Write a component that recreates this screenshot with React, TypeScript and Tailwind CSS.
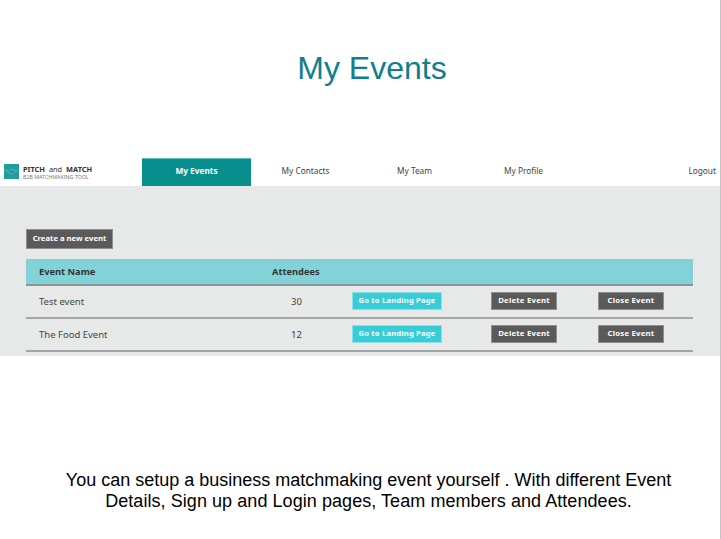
import React from 'react';

const events = [
  { name: 'Test event', attendees: 30 },
  { name: 'The Food Event', attendees: 12 },
];

const DarkButton = ({ label, className }: { label: string; className: string }) => (
  <button className={`h-[18px] w-[66px] bg-[#5a5a5a] border border-[#8e9090] text-white text-[7.8px] font-bold tracking-[0.2px] flex items-center justify-center ${className}`}>
    {label}
  </button>
);

const Logo = () => (
  <div className="flex items-center w-[142px] pl-[4px] pb-[1px]">
    <svg width="15" height="15" viewBox="0 0 15 15" className="shrink-0">
      <rect width="15" height="15" fill="#1f9d9f" />
      <path d="M0 6h3l2 1 2-1.500 2 0 3 1.500h3M3 7l2.500 2.500 2 1 2-1L12 7" fill="none" stroke="#8fd0d0" strokeWidth="0.7" strokeDasharray="1 0.6" />
    </svg>
    <div className="ml-[4px] flex flex-col text-[#333]">
      <div className="text-[7.4px] font-bold leading-[9px] whitespace-nowrap mt-[1px]">
        PITCH <span className="font-normal px-[2px]">and</span> MATCH
      </div>
      <div className="text-[5.3px] leading-[6px] text-[#777] whitespace-nowrap">B2B MATCHMAKING TOOL</div>
    </div>
  </div>
);

export default function App() {
  return (
    <div className="w-[721px] h-[539px] bg-white border-r border-[#c4c6ca] overflow-hidden flex flex-col font-['Noto_Sans',sans-serif]">
      <div className="h-[158px] pt-[46px] text-center pl-[24px]">
        <h1 className="text-[32px] leading-[44px] text-[#0f7f8d] font-['Liberation_Sans',sans-serif]">My Events</h1>
      </div>

      <nav className="h-[28px] flex items-center text-[8.3px] text-[#444] shrink-0">
        <Logo />
        <a className="h-full w-[109px] bg-[#088f8d] border-t border-[#5fbdb9] text-white font-bold flex items-center justify-center pb-[2px]">My Events</a>
        <a className="w-[109px] text-center pb-[2px]">My Contacts</a>
        <a className="w-[109px] text-center pb-[2px]">My Team</a>
        <a className="w-[109px] text-center pb-[2px]">My Profile</a>
        <a className="ml-auto pr-[4px] pb-[2px]">Logout</a>
      </nav>

      <main className="h-[170px] bg-[#e7e8e8] pl-[26px] pr-[27px] pt-[43px] shrink-0">
        <button className="h-[20px] w-[87px] bg-[#5a5a5a] border border-[#8e9090] text-white text-[7.7px] font-bold flex items-center justify-center">
          Create a new event
        </button>
        <div className="mt-[10px]">
          <div className="h-[27px] bg-[#81d3d8] border-b-2 border-[#8a9496] flex items-center text-[9.3px] font-bold text-[#333]">
            <div className="w-[246px] pl-[13px]">Event Name</div>
            <div>Attendees</div>
          </div>
          {events.map((event) => (
            <div key={event.name} className="h-[33px] border-b-2 border-[#a4a6a6] pb-[1px] flex items-center text-[9.5px] text-[#444]">
              <div className="w-[246px] pl-[13px] pt-[2px]">{event.name}</div>
              <div className="w-[80px] pl-[19px] pt-[2px]">{event.attendees}</div>
              <button className="h-[18px] w-[90px] bg-[#36cdd9] border border-[#8fdfe4] text-white text-[7.6px] font-bold tracking-[0.2px] flex items-center justify-center">
                Go to Landing Page
              </button>
              <DarkButton label="Delete Event" className="ml-[49px]" />
              <DarkButton label="Close Event" className="ml-[41px]" />
            </div>
          ))}
        </div>
      </main>

      <p className="mt-[114px] text-[18px] leading-[21px] text-black text-center font-['Liberation_Sans',sans-serif] w-[737px]">
        You can setup a business matchmaking event yourself . With different Event
        <br />
        <span className="tracking-[0.06px]">Details, Sign up and Login pages, Team members and Attendees.</span>
      </p>
    </div>
  );
}
